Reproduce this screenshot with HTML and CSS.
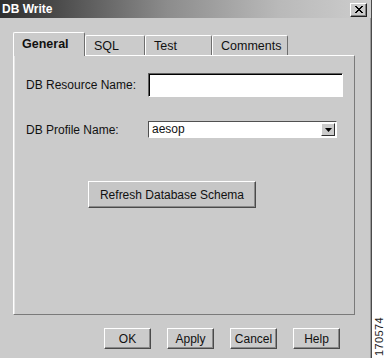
FILE: index.html
```html
<!DOCTYPE html>
<html lang="en">
<head>
    <meta charset="UTF-8">
    <title>DB Write</title>
    <link rel="stylesheet" href="styles.css">
</head>
<body>
    <div class="screen">
        <div class="dialog">
            <div class="titlebar">
                <span class="title">DB Write</span>
                <button class="close" aria-label="Close">
                    <svg width="9" height="8" viewBox="0 0 9 8">
                        <path d="M1 0 L8 7 M2 0 L9 7 M8 0 L1 7 M9 0 L2 7" stroke="#000" stroke-width="1" fill="none"/>
                    </svg>
                </button>
            </div>

            <div class="content">
                <div class="tabs">
                    <div class="tab active">General</div>
                    <div class="tab sql">SQL</div>
                    <div class="tab test">Test</div>
                    <div class="tab comments">Comments</div>
                </div>

                <div class="panel">
                    <div class="row first">
                        <label class="label">DB Resource Name:</label>
                        <input class="field" type="text">
                    </div>
                    <div class="row second">
                        <label class="label">DB Profile Name:</label>
                        <div class="select">
                            <span class="select-value">aesop</span>
                            <span class="select-arrow">
                                <svg width="7" height="4" viewBox="0 0 7 4"><path d="M0 0 H7 L3.5 4 Z" fill="#000"/></svg>
                            </span>
                        </div>
                    </div>
                    <div class="refresh-row">
                        <button class="btn refresh">Refresh Database Schema</button>
                    </div>
                </div>

                <div class="actions">
                    <button class="btn action">OK</button>
                    <button class="btn action">Apply</button>
                    <button class="btn action">Cancel</button>
                    <button class="btn action">Help</button>
                </div>
            </div>
        </div>

        <div class="side">
            <span class="figure-id">170574</span>
        </div>
    </div>
</body>
</html>
```

FILE: styles.css
```css
* {
    box-sizing: border-box;
}
html, body {
    margin: 0;
    padding: 0;
    background: #fff;
    overflow: hidden;
}
body {
    font-family: 'Liberation Sans', Arial, sans-serif;
    font-size: 12px;
    color: #111;
}
.screen {
    display: flex;
    width: 385px;
    height: 358px;
}
.dialog {
    width: 372px;
    height: 358px;
    background: #cbcbcb;
    border-right: 1px solid #4a4a4a;
    box-shadow: inset -1px 0 #9a9a9a;
    display: flex;
    flex-direction: column;
}

/* title bar */
.titlebar {
    height: 18px;
    display: flex;
    align-items: center;
    justify-content: space-between;
    padding: 0 4px 0 2px;
    background: linear-gradient(to right, #2e2e2e 0%, #4a4a4a 15%, #8c8c8c 45%, #b9b9b9 75%, #cdcdcd 100%);
}
.title {
    color: #fff;
    font-weight: bold;
    font-size: 12px;
    line-height: 18px;
}
.close {
    width: 17px;
    height: 14px;
    margin-top: 2px;
    padding: 0;
    display: flex;
    align-items: center;
    justify-content: center;
    background: #cbcbcb;
    border: 1px solid;
    border-color: #fff #202020 #202020 #fff;
    box-shadow: inset -1px -1px #808080;
}

/* tabs */
.content {
    flex: 1;
    padding: 14px 0 0 13px;
}
.tabs {
    display: flex;
    align-items: flex-end;
    height: 23px;
    position: relative;
    z-index: 1;
}
.tab {
    height: 20px;
    padding: 3px 0 0 8px;
    font-size: 12.5px;
    border: 1px solid;
    border-bottom: none;
    border-color: #fff #6e6e6e #fff #fff;
    border-radius: 2px 2px 0 0;
    background: #cbcbcb;
}
.tab.active {
    width: 72px;
    height: 24px;
    margin-bottom: -1px;
    padding-top: 4px;
    font-weight: bold;
}
.tab.sql { width: 60px; }
.tab.test { width: 67px; }
.tab.comments { width: 76px; }

/* panel */
.panel {
    width: 342px;
    height: 260px;
    border: 1px solid;
    border-color: #fff #7a7a7a #7a7a7a #fff;
    box-shadow: inset 1px 0 #e4e4e4;
    padding: 0 0 0 12px;
}
.row {
    display: flex;
    align-items: center;
}
.row.first {
    margin-top: 17px;
    height: 24px;
}
.row.second {
    margin-top: 24px;
    height: 17px;
}
.label {
    width: 122px;
}
.field {
    width: 195px;
    height: 24px;
    margin: 0;
    background: #fff;
    border: 1px solid;
    border-color: #606060 #fff #fff #606060;
    box-shadow: inset 1px 1px #000;
    outline: none;
}
.select {
    width: 189px;
    height: 17px;
    display: flex;
    align-items: center;
    justify-content: space-between;
    background: #fff;
    border: 1px solid;
    border-color: #505050 #fff #fff #505050;
    padding: 0 1px 0 3px;
}
.select-value {
    font-size: 12px;
    line-height: 15px;
}
.select-arrow {
    width: 14px;
    height: 13px;
    display: flex;
    align-items: center;
    justify-content: center;
    background: #cbcbcb;
    border: 1px solid;
    border-color: #fff #303030 #303030 #fff;
}

/* buttons */
.btn {
    font-family: 'Liberation Sans', Arial, sans-serif;
    font-size: 12px;
    color: #111;
    background: #c6c6c6;
    border: 1px solid;
    border-color: #fff #4a4a4a #4a4a4a #fff;
    box-shadow: inset -1px -1px #8a8a8a;
    padding: 0;
    margin: 0;
}
.refresh-row {
    margin-top: 43px;
    padding-left: 62px;
}
.refresh {
    width: 168px;
    height: 27px;
}
.actions {
    display: flex;
    gap: 16px;
    margin-top: 13px;
    padding-left: 91px;
}
.action {
    width: 47px;
    height: 21px;
    background: #cbcbcb;
}

/* figure number */
.side {
    flex: 1;
    display: flex;
    align-items: flex-end;
    justify-content: center;
    padding-bottom: 2px;
}
.figure-id {
    writing-mode: vertical-rl;
    transform: rotate(180deg);
    font-size: 11px;
    letter-spacing: 0.4px;
    color: #222;
}
```
